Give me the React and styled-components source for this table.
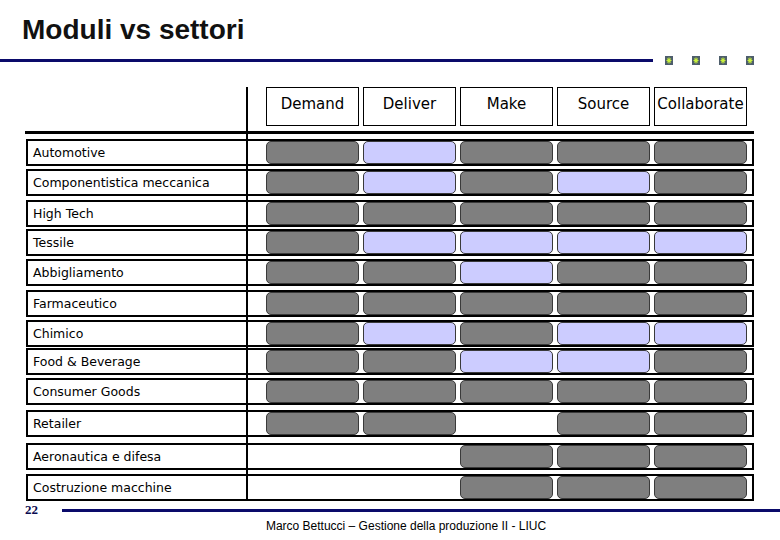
import React from "react";
import styled, { createGlobalStyle } from "styled-components";

const GlobalStyle = createGlobalStyle`
  html, body {
    margin: 0;
    padding: 0;
    background: #ffffff;
  }
`;

const Page = styled.div`
  width: 780px;
  height: 540px;
  overflow: hidden;
  background: #fff;
  position: relative;
`;

const Title = styled.h1`
  margin: 0;
  padding: 14px 0 0 22px;
  height: 32px;
  line-height: 32px;
  font-family: "Liberation Sans", Arial, sans-serif;
  font-weight: bold;
  font-size: 28px;
  color: #111;
`;

const RuleRow = styled.div`
  display: flex;
  align-items: center;
  margin-top: 10px;
  height: 9px;
`;

const Rule = styled.div`
  width: ${(p) => p.$width}px;
  height: 3px;
  background: #0a0a6a;
`;

const Bullets = styled.div`
  display: flex;
  gap: 19px;
  margin-left: 12px;
`;

const Table = styled.div`
  position: relative;
  margin: 22px 0 0 25px;
  width: 730px;
`;

const VLine = styled.div`
  position: absolute;
  left: 221px;
  top: 0;
  width: 2px;
  height: 413px;
  background: #000;
`;

const HeadRow = styled.div`
  display: grid;
  grid-template-columns: repeat(5, 93px);
  gap: 4px;
  margin: 3px 0 0 241px;
`;

const HeadBox = styled.div`
  height: 39px;
  box-sizing: border-box;
  border: 1px solid #000;
  background: #fff;
  text-align: center;
  padding-top: 7px;
  font-family: "DejaVu Sans", sans-serif;
  font-size: 15px;
  line-height: 18px;
  color: #000;
`;

const HRule = styled.div`
  margin-top: 5px;
  width: 729px;
  height: 3px;
  background: #000;
`;

const Rows = styled.div`
  margin-top: 5px;
  margin-left: 1px;
`;

const Row = styled.div`
  display: flex;
  align-items: stretch;
  box-sizing: border-box;
  width: 728px;
  height: 27px;
  margin-top: ${(p) => p.$space}px;
  border: 2px solid #000;
  background: #fff;
`;

const Label = styled.div`
  width: 238px;
  padding-left: 5px;
  box-sizing: border-box;
  display: flex;
  align-items: center;
  font-family: "DejaVu Sans", sans-serif;
  font-size: 12.5px;
  color: #000;
  white-space: nowrap;
`;

const Cells = styled.div`
  display: grid;
  grid-template-columns: repeat(5, 93px);
  gap: 4px;
`;

const Cell = styled.div`
  box-sizing: border-box;
  border-radius: 5px;
  border: ${(p) => (p.$kind === "_" ? "none" : "1px solid #3a3a3a")};
  background: ${(p) =>
    p.$kind === "D" ? "#7f7f7f" : p.$kind === "L" ? "#ccccff" : "transparent"};
`;

const Footer = styled.div`
  display: flex;
  align-items: center;
  gap: 24px;
  margin-top: 2px;
  padding-left: 25px;
  height: 14px;
`;

const PageNum = styled.span`
  font-family: "Liberation Serif", "Times New Roman", serif;
  font-weight: bold;
  font-size: 13px;
  color: #0a0a50;
  width: 13px;
`;

const FootRule = styled.div`
  flex: 1;
  height: 3px;
  background: #0a0a6a;
`;

const Credit = styled.div`
  margin-top: 2px;
  padding-left: 32px;
  text-align: center;
  font-family: "Liberation Sans", Arial, sans-serif;
  font-size: 12px;
  line-height: 14px;
  color: #000;
`;

function Bullet() {
  return (
    <svg width="8" height="9" viewBox="0 0 8 9">
      <rect x="0" y="0" width="8" height="9" fill="#4e5e6c" />
      <path
        d="M4 1.5 L4 7.5 M1.5 4.5 L6.5 4.5 M2.2 2.5 L5.8 6.5 M5.8 2.5 L2.2 6.5"
        stroke="#c8f03c"
        strokeWidth="1.1"
      />
    </svg>
  );
}

const modules = ["Demand", "Deliver", "Make", "Source", "Collaborate"];

const sectors = [
  { name: "Automotive", cells: "DLDDD", space: 0 },
  { name: "Componentistica meccanica", cells: "DLDLD", space: 3 },
  { name: "High Tech", cells: "DDDDD", space: 4 },
  { name: "Tessile", cells: "DLLLL", space: 2 },
  { name: "Abbigliamento", cells: "DDLDD", space: 3 },
  { name: "Farmaceutico", cells: "DDDDD", space: 4 },
  { name: "Chimico", cells: "DLDLL", space: 3 },
  { name: "Food & Beverage", cells: "DDLLD", space: 1 },
  { name: "Consumer Goods", cells: "DDDDD", space: 3 },
  { name: "Retailer", cells: "DD_DD", space: 5 },
  { name: "Aeronautica e difesa", cells: "__DDD", space: 6 },
  { name: "Costruzione macchine", cells: "__DDD", space: 4 },
];

export default function App() {
  return (
    <>
      <GlobalStyle />
      <Page>
        <Title>Moduli vs settori</Title>
        <RuleRow>
          <Rule $width={653} />
          <Bullets>
            <Bullet />
            <Bullet />
            <Bullet />
            <Bullet />
          </Bullets>
        </RuleRow>

        <Table>
          <VLine />
          <HeadRow>
            {modules.map((m) => (
              <HeadBox key={m}>{m}</HeadBox>
            ))}
          </HeadRow>
          <HRule />
          <Rows>
            {sectors.map((s) => (
              <Row key={s.name} $space={s.space}>
                <Label>{s.name}</Label>
                <Cells>
                  {s.cells.split("").map((k, i) => (
                    <Cell key={i} $kind={k} />
                  ))}
                </Cells>
              </Row>
            ))}
          </Rows>
        </Table>

        <Footer>
          <PageNum>22</PageNum>
          <FootRule />
        </Footer>
        <Credit>Marco Bettucci – Gestione della produzione II - LIUC</Credit>
      </Page>
    </>
  );
}
